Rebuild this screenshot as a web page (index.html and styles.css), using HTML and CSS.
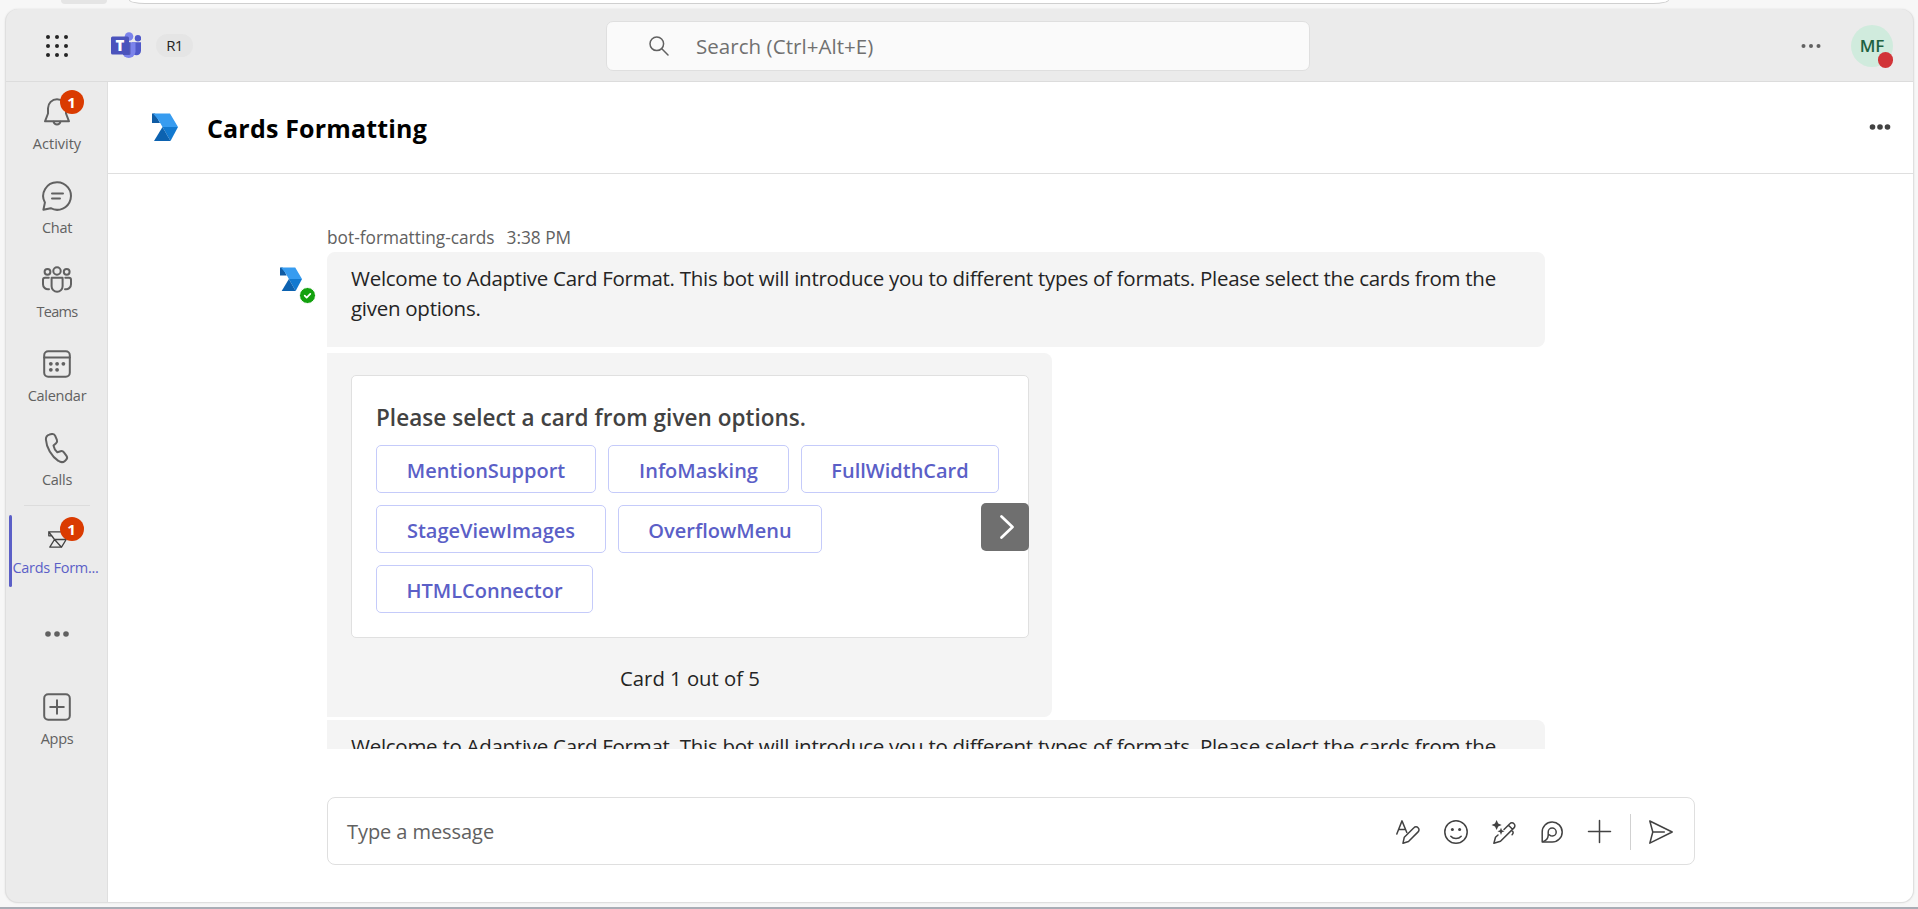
FILE: index.html
```html
<!DOCTYPE html>
<html lang="en">
<head>
<meta charset="utf-8">
<title>Cards Formatting</title>
<link rel="stylesheet" href="styles.css">
</head>
<body>
<svg width="0" height="0" class="defs">
  <symbol id="bot" viewBox="0 0 26 28">
    <path d="M0 .5h3l5 9.500H0z" fill="#0f5ba3"/>
    <path d="M1 .5H18L26 14H10.500L6.500 7z" fill="#379cf0"/>
    <path d="M10.500 14H26L18.500 28z" fill="#1279d0"/>
    <path d="M10.500 14L18.500 28H2z" fill="#0c62b0"/>
  </symbol>
</svg>
<div class="browser"><span class="tab"></span><span class="address"></span></div>
<div class="window">
  <header class="topbar">
    <svg class="waffle" viewBox="0 0 24 24" fill="#242424"><circle cx="3" cy="3" r="2"/><circle cx="12" cy="3" r="2"/><circle cx="21" cy="3" r="2"/><circle cx="3" cy="12" r="2"/><circle cx="12" cy="12" r="2"/><circle cx="21" cy="12" r="2"/><circle cx="3" cy="21" r="2"/><circle cx="12" cy="21" r="2"/><circle cx="21" cy="21" r="2"/></svg>
    <div class="logo">
      <svg viewBox="0 0 30 28"><circle cx="27" cy="6.300" r="3.200" fill="#5059c9"/><circle cx="18" cy="4.500" r="4.300" fill="#7b83eb"/><path d="M21 10.300h9v8.500a4.500 4.500 0 0 1-9 0z" fill="#5059c9"/><path d="M11 10.300h13.500v9.700a6.800 6.800 0 0 1-13.500 0z" fill="#7b83eb"/><path d="M11 10.300h8.500v11.200a1.500 1.500 0 0 1-1.500 1.500h-6z" fill="#33378c" opacity=".55"/><rect y="4.500" width="18" height="18" rx="1.500" fill="#4b53bc"/></svg>
      <span class="logo-t">T</span>
    </div>
    <span class="pill">R1</span>
    <div class="search">
      <svg viewBox="0 0 20 20" fill="none" stroke="#616161" stroke-width="1.500" stroke-linecap="round"><circle cx="7.800" cy="7.800" r="6.800"/><path d="M12.800 12.800L19 19"/></svg>
      <span>Search (Ctrl+Alt+E)</span>
    </div>
    <svg class="top-more" viewBox="0 0 20 6" fill="#616161"><circle cx="2.500" cy="3" r="2"/><circle cx="10" cy="3" r="2"/><circle cx="17.500" cy="3" r="2"/></svg>
    <div class="avatar"><span>MF</span><i class="busy"></i></div>
  </header>
  <div class="body">
    <nav class="rail">
      <a class="item"><svg viewBox="0 0 30 30"><path d="M15 2.200a9 9 0 0 0-9 9v5.300L3 24.300h24L24 16.500v-5.300a9 9 0 0 0-9-9z"/><path d="M11.600 24.800a3.500 3.500 0 0 0 6.800 0"/></svg><span class="wide">Activity</span><b class="badge">1</b></a>
      <a class="item"><svg viewBox="0 0 30 30"><path d="M15 1.200a13.800 13.800 0 1 1-6.300 26L1.400 28.800 2.900 21.600A13.800 13.800 0 0 1 15 1.200z"/><path d="M10 12.500h11M10 17.600h8"/></svg><span>Chat</span></a>
      <a class="item"><svg viewBox="0 0 30 30"><circle cx="15" cy="6" r="3.700"/><circle cx="5.500" cy="6.800" r="2.900"/><circle cx="24.700" cy="6.800" r="2.900"/><path d="M9.600 12.800h11v8.400a5.500 5.500 0 0 1-11 0zM6.800 12.800H3a2 2 0 0 0-2 2v4.400a5 5 0 0 0 6 5M23.300 12.800H27a2 2 0 0 1 2 2v4.400a5 5 0 0 1-6 5"/></svg><span class="tight">Teams</span></a>
      <a class="item"><svg viewBox="0 0 30 30"><rect x="2.200" y="2.200" width="25.600" height="25.600" rx="4"/><path d="M2.200 8.500h25.600"/><g class="dots"><circle cx="8.800" cy="14.800" r="1.900"/><circle cx="15.100" cy="14.800" r="1.900"/><circle cx="21.400" cy="14.800" r="1.900"/><circle cx="8.800" cy="20.800" r="1.900"/><circle cx="15.100" cy="20.800" r="1.900"/></g></svg><span>Calendar</span></a>
      <a class="item"><svg viewBox="0 0 30 30"><path d="M7.500 1.600L9.800 1.100a3 3 0 0 1 3.400 1.800l1.700 4a3 3 0 0 1-.8 3.300l-2.600 2.400c.4 2.400 2 5 3.800 6.600l3.300-1a3 3 0 0 1 3.300 1.100l2.600 3.600a3 3 0 0 1-.4 3.900l-1.200 1.100c-1.900 1.700-4.600 1.300-6.600-.1C9.500 23.300 4.400 14.500 3.900 6.500 3.800 4.200 5.300 2.200 7.500 1.600z"/></svg><span>Calls</span></a>
      <hr>
      <a class="item active"><svg class="app" viewBox="0 0 19 17"><path d="M.8.800H13.500L18.200 8.500H6.500L4 4.800H.8zM.8.800l5.700 7.700L1.800 16.200H13.500L6.500 8.500M18.200 8.500l-4.700 7.700"/></svg><span class="app-name">Cards Form...</span><b class="badge">1</b></a>
      <svg class="rail-more" viewBox="0 0 24 6"><circle cx="3" cy="3" r="2.800"/><circle cx="12" cy="3" r="2.800"/><circle cx="21" cy="3" r="2.800"/></svg>
      <a class="item apps"><svg viewBox="0 0 30 30"><rect x="2.200" y="2.200" width="25.600" height="25.600" rx="4"/><path d="M15 8.200v13.600M8.200 15h13.600"/></svg><span>Apps</span></a>
    </nav>
    <main class="main">
      <div class="title"><svg class="title-logo"><use href="#bot"/></svg><h1>Cards Formatting</h1>
        <svg class="title-more" viewBox="0 0 22 6" fill="#424242"><circle cx="3.500" cy="3" r="2.800"/><circle cx="11" cy="3" r="2.800"/><circle cx="18.500" cy="3" r="2.800"/></svg></div>
      <section class="chat">
        <div class="meta"><span>bot-formatting-cards</span><span>3:38 PM</span></div>
        <div class="face"><svg viewBox="0 0 26 28" preserveAspectRatio="none"><use href="#bot" width="26" height="28"/></svg><i><svg viewBox="0 0 16 16"><path d="M5 8.200l2.100 2.100L11 6.200" fill="none" stroke="#fff" stroke-width="1.800" stroke-linecap="round" stroke-linejoin="round"/></svg></i></div>
        <div class="bubble text">Welcome to Adaptive Card Format. This bot will introduce you to different types of formats. Please select the cards from the given options.</div>
        <div class="bubble carousel">
          <div class="card">
            <h2>Please select a card from given options.</h2>
            <div class="actions">
              <button class="w1">MentionSupport</button><button class="w2">InfoMasking</button><button class="w3">FullWidthCard</button><button class="w4">StageViewImages</button><button class="w5">OverflowMenu</button><button class="w6">HTMLConnector</button>
            </div>
            <div class="next"><svg viewBox="0 0 14 24"><path d="M1.500 1.500L12.500 12 1.500 22.500" fill="none" stroke="#fff" stroke-width="2.700" stroke-linecap="round" stroke-linejoin="round"/></svg></div>
          </div>
          <p class="count">Card 1 out of 5</p>
        </div>
        <div class="bubble text again">Welcome to Adaptive Card Format. This bot will introduce you to different types of formats. Please select the cards from the</div>
      </section>
      <div class="composer">
        <span class="ph">Type a message</span>
        <svg viewBox="0 0 24 24"><path d="M.8 14L6 .9 10.800 12.500M2.700 9.500h6.600"/><path d="M7 23.200l1.300-6 9.600-9.500a2.900 2.900 0 0 1 4.200 0 2.900 2.900 0 0 1 0 4.200l-9.600 9.600z"/></svg>
        <svg viewBox="0 0 24 24"><circle cx="12" cy="12" r="11.200"/><path d="M6.800 16.200c2.700 3 7.700 3 10.400 0"/><g class="fill"><circle cx="8.400" cy="9.500" r="1.500"/><circle cx="15.600" cy="9.500" r="1.500"/></g></svg>
        <svg viewBox="0 0 24 24"><path class="fill" d="M4.600 0L6.200 3.400 9.700 5 6.200 6.600 4.600 10 3 6.600-.5 5 3 3.400zM9 7.800l1 2.500 2.500 1-2.500 1-1 2.600-1-2.600-2.500-1 2.500-1z"/><path d="M12 9.500l5.800-5.800a2.900 2.900 0 0 1 4.200 0 2.900 2.900 0 0 1 0 4.200L8.500 21.300l-6.600 2 1.600-6 2.500-2.300M16.500 5.200l4 4M19.500 10.500c2 1 2.200 2.700.6 4.300"/></svg>
        <svg viewBox="0 0 24 24"><path d="M2.200 22V12.200A10 10 0 1 1 12.200 22z"/><path d="M3 21.600c3.200-1 5-2.800 5.200-6.200v-3.300a4 4 0 1 1 4.200 4c-1.200 0-2.200-.5-2.800-1.200"/></svg>
        <svg viewBox="0 0 24 24"><path d="M11.500.5v22M.5 11.500h22"/></svg>
        <i class="sep"></i>
        <svg viewBox="0 0 24 24"><path d="M.8 1L23.200 12 .8 23.200 3.800 12zM3.800 12h11.500"/></svg>
      </div>
    </main>
  </div>
</div>
<footer class="taskbar"></footer>
</body>
</html>
```
FILE: styles.css
```css
* { box-sizing: border-box; }
body { margin: 0; height: 909px; overflow: hidden; display: flex; flex-direction: column; background: #f7f7f7; font-family: "Open Sans", "Noto Sans", sans-serif; color: #242424; }
span { white-space: nowrap; }
.defs { position: absolute; }
.browser { height: 9px; flex: none; display: flex; align-items: flex-start; padding-left: 61px; }
.tab { width: 46px; height: 4px; background: #e5e5e5; border-radius: 0 0 4px 4px; }
.address { margin-left: 22px; width: 1540px; height: 4px; background: #fff; border: 1px solid #cfcfcf; border-top: 0; border-radius: 0 0 16px 16px / 0 0 4px 4px; }
.window { margin: 0 4px 0 5px; height: 894px; flex: none; border: 1px solid #dfdfdf; border-top: 0; border-radius: 13px; overflow: hidden; background: #ebebeb; display: flex; flex-direction: column; box-shadow: 0 0 2px #ddd; }
.topbar { height: 73px; flex: none; border-bottom: 1px solid #dcdcdc; display: flex; align-items: center; padding-top: 1px; }
.waffle { width: 24px; height: 24px; margin-left: 39px; }
.logo { position: relative; width: 30px; height: 28px; margin-left: 42px; }
.logo svg { display: block; width: 30px; height: 28px; }
.logo-t { position: absolute; left: 0; top: 4px; width: 18px; line-height: 19px; text-align: center; color: #fff; font-size: 15px; font-weight: 800; }
.pill { margin-left: 15px; width: 37px; height: 23px; line-height: 22px; border-radius: 12px; background: #e5e5e5; text-align: center; font-size: 15px; letter-spacing: -.7px; }
.search { margin-left: 413px; width: 704px; height: 50px; border: 1px solid #dfdfdf; border-radius: 7px; background: #fafafa; display: flex; align-items: center; padding: 1px 0 0 42px; font-size: 20.500px; letter-spacing: .05px; color: #707070; }
.search svg { width: 20px; height: 20px; margin: -1px 27px 0 0; }
.top-more { width: 20px; height: 6px; margin-left: 491px; }
.avatar { position: relative; width: 42px; height: 42px; margin-left: 30px; border-radius: 50%; background: #d0ebdd; color: #1f6241; font-weight: 600; font-size: 17px; line-height: 42px; text-align: center; }
.busy { position: absolute; right: 0; bottom: -1px; width: 15.500px; height: 15.500px; border-radius: 50%; background: #d13438; }
.body { flex: 1; display: flex; min-height: 0; }
.rail { width: 102px; flex: none; border-right: 1px solid #dfdfdf; display: flex; flex-direction: column; align-items: center; color: #616161; }
.item { position: relative; width: 102px; height: 84px; flex: none; display: flex; flex-direction: column; align-items: center; padding: 15px 0 0 1px; font-size: 14.500px; line-height: 20px; letter-spacing: -.27px; }
.wide { letter-spacing: 0; }
.tight { letter-spacing: -.7px; }
.item svg { width: 30px; height: 30px; margin-bottom: 7px; fill: none; stroke: #616161; stroke-width: 2; stroke-linecap: round; stroke-linejoin: round; overflow: visible; }
.item .dots { fill: #616161; stroke: none; }
.badge { position: absolute; left: 54px; top: 8px; width: 24px; height: 24px; border-radius: 50%; background: #da3b01; color: #fff; text-align: center; line-height: 24px; font-size: 15px; font-weight: 700; }
.rail hr { width: 66px; margin: 3px 0 9px; border: 0; border-top: 1px solid #dcdcdc; flex: none; }
.item.active { height: 73px; padding-top: 16px; color: #5b5fc7; }
.item.active::before { content: ""; position: absolute; left: 3px; top: 0; width: 3px; height: 72px; background: #5b5fc7; border-radius: 2px; }
.item.active .badge { top: 2px; }
.item .app { width: 19px; height: 17px; margin-bottom: 10px; stroke: #424242; stroke-width: 1.300; }
.app-name { margin-right: 3px; }
.rail-more { width: 24px; height: 6px; flex: none; margin-top: 43px; fill: #616161; }
.apps { margin-top: 40px; }
.main { flex: 1; background: #fff; display: flex; flex-direction: column; align-items: flex-start; min-width: 0; }
.title { width: 100%; height: 92px; flex: none; border-bottom: 1px solid #dfdfdf; display: flex; align-items: center; padding-left: 44px; }
.title-logo { width: 26px; height: 28px; margin-top: -1px; }
h1 { margin: 0 0 0 29px; font-size: 25px; line-height: 34px; letter-spacing: .17px; color: #000; font-weight: 700; flex: 1; }
.title-more { width: 22px; height: 6px; margin: -2px 22px 0 0; }
.chat { position: relative; margin-left: 160px; width: 1300px; height: 575px; padding: 51px 0 0 59px; overflow: hidden; flex: none; }
.meta { height: 27px; line-height: 26px; font-size: 17.300px; color: #616161; display: flex; gap: 12px; }
.face { position: absolute; left: 12px; top: 93px; }
.face svg { display: block; width: 22px; height: 24px; }
.face i { position: absolute; left: 19px; top: 20px; width: 17px; height: 17px; border-radius: 50%; background: #13a10e; border: 1px solid #fff; }
.face i svg { width: 15px; height: 15px; }
.bubble { background: #f4f4f4; border-radius: 0 8px 8px 0; }
.text { width: 1218px; height: 95px; padding: 11px 23px 0 24px; font-size: 20.500px; line-height: 30px; letter-spacing: -.275px; border-top-left-radius: 8px; }
.carousel { width: 725px; height: 364px; margin: 6px 0 3px; padding: 22px 23px 0 24px; }
.card { position: relative; height: 263px; border: 1px solid #e0e0e0; border-radius: 5px; background: #fff; padding: 27px 0 0 24px; }
h2 { margin: 0 0 12px; font-size: 22.500px; line-height: 30px; font-weight: 600; letter-spacing: .04px; color: #424242; }
.actions { display: flex; flex-wrap: wrap; gap: 12px; width: 640px; }
.actions button { height: 48px; padding: 2px 0 0; background: #fff; border: 1px solid #c5cbfa; border-radius: 5px; font: 600 20px "Open Sans", sans-serif; color: #5b5fc7; }
.w1 { width: 220px; } .w2 { width: 181px; } .w3 { width: 198px; } .w4 { width: 230px; } .w5 { width: 204px; } .w6 { width: 217px; }
.next { position: absolute; right: -1px; top: 127px; width: 48px; height: 48px; border-radius: 5px; background: #6f6f6f; display: flex; align-items: center; justify-content: center; }
.next svg { width: 14px; height: 24px; margin-left: 3px; }
.count { margin: 24px 0 0; text-align: center; font-size: 20.300px; line-height: 32px; }
.again { border-top-left-radius: 0; }
.composer { margin: 48px 0 0 219px; width: 1368px; height: 68px; border: 1px solid #dfdfdf; border-radius: 8px; display: flex; align-items: center; padding: 1px 0 0 19px; gap: 24px; }
.ph { font-size: 20px; letter-spacing: -.07px; color: #616161; margin-right: auto; }
.composer svg { width: 24px; height: 24px; margin-top: 1px; fill: none; stroke: #424242; stroke-width: 1.500; stroke-linejoin: round; stroke-linecap: round; overflow: visible; }
.composer .fill { fill: #424242; stroke: none; }
.sep { width: 1px; height: 36px; background: #d1d1d1; margin: 0 -6px; }
.composer svg:last-child { margin-right: 21px; }
.taskbar { margin-top: auto; height: 2px; background: #a9adb5; }
```
